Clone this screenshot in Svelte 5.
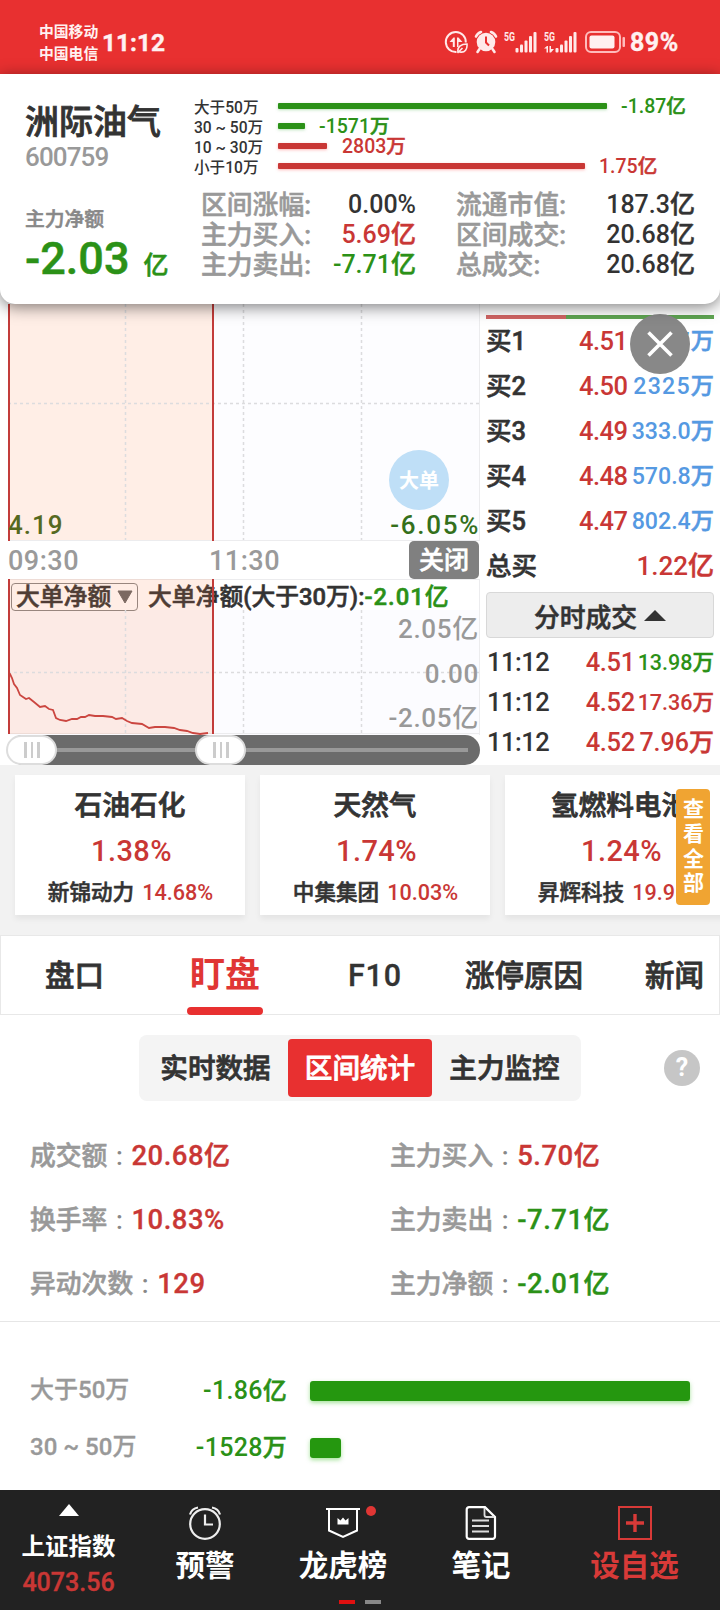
<script lang="ts">
  type Tone = "up" | "down" | "ink";

  const flows: { label: string; value: string; width: number; gap: number; tone: Tone }[] = [
    { label: "大于50万", value: "-1.87亿", width: 329, gap: 14, tone: "down" },
    { label: "30 ~ 50万", value: "-1571万", width: 27, gap: 14, tone: "down" },
    { label: "10 ~ 30万", value: "2803万", width: 49, gap: 15, tone: "up" },
    { label: "小于10万", value: "1.75亿", width: 307, gap: 14, tone: "up" },
  ];

  const summary: { label: string; value: string; tone: Tone }[] = [
    { label: "区间涨幅:", value: "0.00%", tone: "ink" },
    { label: "流通市值:", value: "187.3亿", tone: "ink" },
    { label: "主力买入:", value: "5.69亿", tone: "up" },
    { label: "区间成交:", value: "20.68亿", tone: "ink" },
    { label: "主力卖出:", value: "-7.71亿", tone: "down" },
    { label: "总成交:", value: "20.68亿", tone: "ink" },
  ];

  const bids = [
    { name: "买1", price: "4.51", amount: "2147万" },
    { name: "买2", price: "4.50", amount: "2325万" },
    { name: "买3", price: "4.49", amount: "333.0万" },
    { name: "买4", price: "4.48", amount: "570.8万" },
    { name: "买5", price: "4.47", amount: "802.4万" },
  ];

  const trades = [
    { time: "11:12", price: "4.51", amount: "13.98万", tone: "down", big: false },
    { time: "11:12", price: "4.52", amount: "17.36万", tone: "up", big: false },
    { time: "11:12", price: "4.52", amount: "7.96万", tone: "up", big: true },
  ];

  const sectors = [
    { name: "石油石化", pct: "1.38%", stock: "新锦动力", stockPct: "14.68%" },
    { name: "天然气", pct: "1.74%", stock: "中集集团", stockPct: "10.03%" },
    { name: "氢燃料电池", pct: "1.24%", stock: "昇辉科技", stockPct: "19.95%" },
  ];

  const stats: { label: string; value: string; tone: Tone }[] = [
    { label: "成交额", value: "20.68亿", tone: "up" },
    { label: "主力买入", value: "5.70亿", tone: "up" },
    { label: "换手率", value: "10.83%", tone: "up" },
    { label: "主力卖出", value: "-7.71亿", tone: "down" },
    { label: "异动次数", value: "129", tone: "up" },
    { label: "主力净额", value: "-2.01亿", tone: "down" },
  ];

  const ranges = [
    { label: "大于50万", value: "-1.86亿", width: 380 },
    { label: "30 ~ 50万", value: "-1528万", width: 31 },
  ];

  // net big-order curve, chart coordinates
  const curve =
    "M0 94 L2 95 L4 99 L6 105 L9 109 L12 116 L15 118 L18 120 L21 119 L26 123 L32 128 L37 127 L41 130 L45 131 L48 139 L52 141 L58 142 L64 140 L69 140 L73 138 L77 138 L81 136 L87 137 L95 137 L104 138 L108 140 L114 139 L119 142 L124 144 L134 145 L141 149 L147 148 L157 148 L166 149 L172 151 L179 152 L185 154 L192 155 L200 154";
</script>

<!-- digits run a little larger than the unit that follows them -->
{#snippet num(value: string)}
  {@const unit = /[万亿]$/.test(value) ? value.slice(-1) : ""}
  {unit ? value.slice(0, -1) : value}{#if unit}<span class="unit">{unit}</span>{/if}
{/snippet}

{#snippet signal(arrows: boolean)}
  <svg class="signal" width="34" height="24" viewBox="0 0 34 24" fill="#ffe9e9">
    <text x="0" y="10.5" font-size="12.5" font-weight="700" textLength="11" lengthAdjust="spacingAndGlyphs">5G</text>
    <rect x="11.500" y="18" width="3" height="4.500" rx="1" />
    <rect x="16" y="14.500" width="3" height="8" rx="1" />
    <rect x="20.500" y="10.500" width="3" height="12" rx="1" />
    <rect x="25" y="6" width="3" height="16.500" rx="1" />
    <rect x="29.500" y="2" width="3" height="20.500" rx="1" />
    {#if arrows}
      <path d="M0 18.500l3-2.500h1v6.500H2.500V18.500zM5.500 16H7v3h3L7 22.500H5.500z" />
    {/if}
  </svg>
{/snippet}

<div class="screen">
  <header class="status">
    <div class="carriers"><span>中国移动</span><span>中国电信</span></div>
    <div class="clock">11:12</div>
    <div class="icons">
      <svg width="24" height="24" viewBox="0 0 24 24" fill="none" stroke="#ffe9e9" stroke-width="2">
        <path d="M21.800 12.500A10 10 0 1 0 12.500 22" />
        <path d="M5.500 12l4-4.500h1.300V17H8.800v-5zM13 7.500h1.500l4 4.500h-4v5H13z" fill="#ffe9e9" stroke="none" />
        <path d="M14 22c-1-5 3-8 9-8 .5 5-2 9-7 8zM13.500 23l5-5" stroke-width="1.600" />
      </svg>
      <svg width="24" height="24" viewBox="0 0 24 24" fill="#ffe9e9">
        <circle cx="12" cy="12" r="9.300" />
        <path d="M2 6.500A8 8 0 0 1 7 2M22 6.500A8 8 0 0 0 17 2M5.500 19L3.500 22M18.500 19l2 3" stroke="#ffe9e9" stroke-width="2.600" stroke-linecap="round" fill="none" />
        <path d="M12 6.500V12.500l3 3" stroke="#e83030" stroke-width="2" fill="none" />
      </svg>
      {@render signal(false)}
      {@render signal(true)}
      <svg class="battery" width="42" height="24" viewBox="0 0 42 24">
        <rect x="1" y="2" width="34" height="20" rx="5" fill="none" stroke="#fbb" stroke-width="2" />
        <rect x="4.500" y="5.500" width="25" height="13" rx="2" fill="#fff1f1" />
        <rect x="37.500" y="7" width="2.500" height="10" rx="1" fill="#fbb" />
      </svg>
    </div>
    <div class="charge">89%</div>
  </header>

  <section class="panel">
    <div class="who">
      <h1>洲际油气</h1>
      <div class="code">600759</div>
      <div class="netLabel">主力净额</div>
      <div class="net down">-2.03<span>亿</span></div>
    </div>
    <div class="info">
      <div class="flows">
        {#each flows as f}
          <div class="flow">
            <span class="flowLabel">{f.label}</span>
            <i class="flowBar {f.tone}" style="width:{f.width}px"></i>
            <span class="flowValue {f.tone}" style="margin-left:{f.gap}px">{@render num(f.value)}</span>
          </div>
        {/each}
      </div>
      <div class="summary">
        {#each summary as s}
          <span class="muted">{s.label}</span>
          <b class={s.tone}>{@render num(s.value)}</b>
        {/each}
      </div>
    </div>
  </section>

  <section class="market">
    <div class="charts">
      <div class="price">
        <svg width="472" height="237" viewBox="0 0 472 237">
          <rect width="472" height="237" fill="#fdfdff" />
          <rect width="205" height="237" fill="#ffeee6" />
          <path d="M117.500 0V237M235.500 0V237M353.500 0V237M0 99.500H471" class="grid" />
          <path d="M0 236.500H472M471.500 0V237" stroke="#ececee" />
          <path d="M1 0V237M205 0V237" stroke="#c33c3a" stroke-width="2" />
        </svg>
        <span class="low">4.19</span>
        <span class="drop">-6.05%</span>
        <span class="bigOrder">大单</span>
      </div>
      <div class="axis">
        <span>09:30</span>
        <span>11:30</span>
        <button>关闭</button>
      </div>
      <div class="orders">
        <svg width="472" height="156" viewBox="0 0 472 156">
          <rect y="31" width="472" height="125" fill="#fcfcff" />
          <path d="M0 .5H472M471.500 0V156M0 154.500H472" stroke="#ececee" />
          <path d="M235.500 31V155M353.500 31V155M205 93.500H471" class="grid" />
        </svg>
        <div class="legend">
          <span class="select">大单净额<svg width="16" height="14" viewBox="0 0 16 14"><path d="M1 1h14L8 13z" fill="#666" stroke="#666" stroke-linejoin="round" /></svg></span>
          <span class="legendText">大单净额(大于30万):<em class="down">-2.01亿</em></span>
        </div>
        <div class="scale"><span>2.05亿</span><span>0.00</span><span>-2.05亿</span></div>
        <svg class="veil" width="206" height="157" viewBox="0 0 206 157">
          <rect width="205" height="155" fill="#ff7e45" fill-opacity=".14" />
          <path d="M117.500 31V155M0 93.500H205" class="grid" />
          <path d={curve} fill="none" stroke="#cb4640" stroke-width="1.800" />
          <path d="M1 0V155M205 0V155" stroke="#c33c3a" stroke-width="2" />
        </svg>
      </div>
      <div class="slider">
        <i class="knob"></i>
        <i class="knob right"></i>
      </div>
    </div>

    <div class="book">
      <div class="ratio"><i></i></div>
      {#each bids as b}
        <div class="bid">
          <span>{b.name}</span>
          <span class="bidPrice up">{b.price}</span>
          <span class="amount" class:whole={!b.amount.includes(".")}>{@render num(b.amount)}</span>
        </div>
      {/each}
      <div class="bid">
        <span>总买</span>
        <span class="total up">{@render num("1.22亿")}</span>
      </div>
      <button class="ticks">
        分时成交
        <svg width="22" height="11" viewBox="0 0 22 11"><path d="M0 11L11 0l11 11z" fill="#333" /></svg>
      </button>
      {#each trades as t}
        <div class="trade">
          <span class="time">{t.time}</span>
          <span class="tradePrice up">{t.price}</span>
          <span class="tradeAmount {t.tone}" class:big={t.big}>{@render num(t.amount)}</span>
        </div>
      {/each}
      <span class="close">
        <svg width="26" height="26" viewBox="0 0 26 26"><path d="M1.500 1.500l23 23M24.500 1.500l-23 23" stroke="#fff" stroke-width="3.600" /></svg>
      </span>
    </div>
  </section>

  <section class="sectors">
    {#each sectors as s}
      <div class="card">
        <div class="cardName">{s.name}</div>
        <div class="cardPct">{s.pct}</div>
        <div class="cardStock">{s.stock}<span>{s.stockPct}</span></div>
      </div>
    {/each}
    <span class="all">查看全部</span>
  </section>

  <nav class="tabs">
    <span>盘口</span>
    <span class="active">盯盘</span>
    <span>F10</span>
    <span>涨停原因</span>
    <span>新闻</span>
  </nav>

  <div class="switcher">
    <div class="segment">
      <span>实时数据</span>
      <span class="on">区间统计</span>
      <span>主力监控</span>
    </div>
    <span class="help">?</span>
  </div>

  <section class="stats">
    {#each stats as s}
      <div class="stat">
        <span class="muted">{s.label}</span>
        <span class="colon">:</span>
        <b class={s.tone}>{@render num(s.value)}</b>
      </div>
    {/each}
  </section>

  <section class="ranges">
    {#each ranges as r}
      <div class="range">
        <span class="rangeLabel">{r.label}</span>
        <span class="rangeValue down">{@render num(r.value)}</span>
        <i style="width:{r.width}px"></i>
      </div>
    {/each}
  </section>

  <footer class="dock">
    <div class="index">
      <svg width="20" height="12" viewBox="0 0 20 12"><path d="M0 12L10 0l10 12z" fill="#fff" /></svg>
      <strong>上证指数</strong>
      <span>4073.56</span>
    </div>
    <div class="item">
      <svg width="34" height="34" viewBox="0 0 34 34" fill="none" stroke="#eee" stroke-width="2.200">
        <circle cx="17" cy="18" r="14.800" />
        <path d="M17 8.500V18.500h8M2 8.500C3 5 6 2.200 10 1.500M32 8.500C31 5 28 2.200 24 1.500" />
      </svg>
      <strong>预警</strong>
    </div>
    <div class="item">
      <svg width="34" height="34" viewBox="0 0 34 34" fill="none" stroke="#fff" stroke-width="2">
        <path d="M0 3H34M3 3V24.500L17 31l14-6.500V3" />
        <path d="M11.500 18.500V12l3 2.500L17 11.500l2.500 3L22.500 12v6.500z" fill="#fff" stroke="none" />
      </svg>
      <strong>龙虎榜</strong>
      <i class="dot"></i>
    </div>
    <div class="item">
      <svg width="34" height="34" viewBox="0 0 34 34" fill="none" stroke="#fff" stroke-width="2.200">
        <path d="M5 1.200H21L31 11V30.500a2.300 2.300 0 0 1-2.300 2.300H5a2.300 2.300 0 0 1-2.300-2.300V3.500A2.300 2.300 0 0 1 5 1.200z" />
        <path d="M20.500 2v7a2 2 0 0 0 2 2H30M8 14.500h17M8 20h17M8 25.500h17" stroke="#ddd" stroke-width="1.800" />
      </svg>
      <strong>笔记</strong>
    </div>
    <div class="item red">
      <svg width="34" height="34" viewBox="0 0 34 34" fill="none" stroke="#d83a38">
        <rect x="1" y="1" width="32" height="32" stroke-width="2" />
        <path d="M17 8V26M8 17H26" stroke-width="3.400" />
      </svg>
      <strong>设自选</strong>
    </div>
    <div class="pager"><i></i><i></i></div>
  </footer>
</div>

<style>
  :global(body){
    margin: 0;
    background: #fff;
  }
  .screen{
    width: 720px;
    height: 1610px;
    overflow: hidden;
    background: #fff;
    color: #333;
    font-family: Roboto, "Noto Sans CJK SC", sans-serif;
    font-weight: 500;
    white-space: nowrap;
  }
  .screen :global(svg){ display: block; flex: none; }
  button{
    font: inherit;
    border: 0;
    padding: 0;
  }
  em, i{ font-style: normal; }
  b{ font-weight: 500; }
  .up{ color: #c93735; }
  .down{ color: #2b9117; }
  .ink{ color: #333; }
  .muted{ color: #999; }
  .grid{
    fill: none;
    stroke: #dcdcde;
    stroke-width: 1.500;
    stroke-dasharray: 3 3;
  }

  /* the CJK face has no medium cut, thicken the regular one */
  h1, .unit, .net span, .muted, .netLabel, .axis button, .legend, .bid > span:first-child,
  .ticks, .cardName, .cardStock, .tabs span, .segment span, .rangeLabel{
    -webkit-text-stroke: .55px currentColor;
  }
  h1, .tabs span, .segment span, .cardName{ -webkit-text-stroke-width: .8px; }
  .cardStock span, .tabs .active{ -webkit-text-stroke-width: 0; }

  .status{
    height: 74px;
    box-sizing: border-box;
    padding: 21px 0 0 39px;
    background: #e83030;
    color: #fff1f1;
    display: flex;
    font-weight: 700;
  }
  .carriers{
    width: 63px;
    font-size: 14.800px;
    line-height: 22px;
    display: flex;
    flex-direction: column;
  }
  .clock{
    width: 329px;
    font-size: 24.500px;
    line-height: 43px;
    -webkit-text-stroke: .4px currentColor;
  }
  .icons{
    display: flex;
    height: 24px;
    margin-top: 9px;
    width: 199px;
    margin-left: 13px;
  }
  .icons svg:nth-child(2){ margin-left: 6px; }
  .signal{ margin-left: 6px; }
  .battery{ margin-left: 7px; }
  .charge{
    margin-left: -13px;
    font-size: 25px;
    line-height: 43px;
    letter-spacing: .5px;
    -webkit-text-stroke: .4px currentColor;
  }

  .panel{
    position: relative;
    z-index: 2;
    height: 230px;
    display: flex;
    background: #fff;
    border-radius: 0 0 15px 15px;
    box-shadow: 0 3px 16px rgba(0, 0, 0, .5);
  }
  .who{
    width: 169px;
    padding: 27px 0 0 25px;
  }
  h1{
    margin: 0;
    font-size: 34px;
    line-height: 42px;
    font-weight: 500;
  }
  .code{
    font-size: 26px;
    line-height: 28px;
    letter-spacing: -.9px;
    color: #999;
  }
  .netLabel{
    margin-top: 36px;
    font-size: 19.800px;
    line-height: 26px;
    color: #888;
  }
  .net{
    margin-top: 2px;
    font-size: 45px;
    line-height: 48px;
    -webkit-text-stroke: .5px currentColor;
  }
  .net span{
    font-size: 25px;
    margin-left: 14px;
  }
  .info{ padding-top: 22px; }
  .flow{
    height: 20px;
    display: flex;
    align-items: center;
  }
  .flowLabel{
    width: 84px;
    padding-top: 4px;
    font-size: 15.600px;
    line-height: 20px;
  }
  .flowBar{
    height: 6px;
    border-radius: 1px;
    background: currentColor;
    box-shadow: 0 1px 3px rgba(120, 200, 120, .5);
  }
  .flowBar.up{ box-shadow: 0 1px 3px rgba(255, 120, 120, .5); }
  .flowValue{
    padding-top: 1px;
    font-size: 19.500px;
    line-height: 20px;
  }
  .summary{
    margin: 14px 0 0 7px;
    display: grid;
    grid-template-columns: 116px 99px 156px 123px;
    grid-auto-rows: 30px;
    font-size: 25.800px;
    line-height: 30px;
  }
  .summary .muted:nth-child(4n + 3){ padding-left: 40px; }
  .summary b{
    text-align: right;
    font-size: 25px;
  }

  .market{
    height: 461px;
    display: flex;
  }
  .charts{
    width: 472px;
    margin-left: 8px;
  }
  .price{
    position: relative;
    height: 237px;
  }
  .price span{
    position: absolute;
    font-size: 26px;
    line-height: 28px;
  }
  .low{
    left: 0;
    bottom: 2px;
    color: #56691f;
    letter-spacing: 1px;
  }
  .price .drop{
    right: 0;
    bottom: 2px;
    color: #34701c;
    letter-spacing: 1.700px;
  }
  .price .bigOrder{
    left: 381px;
    top: 146px;
    width: 60px;
    height: 60px;
    border-radius: 50%;
    background: #bfdff7;
    color: #fff;
    font-size: 20px;
    line-height: 62px;
    font-weight: 700;
    text-align: center;
  }
  .axis{
    height: 38px;
    display: flex;
    font-size: 27px;
    line-height: 40px;
    letter-spacing: .5px;
    color: #9a9a9a;
  }
  .axis span{ width: 201px; }
  .axis button{
    margin-left: -1px;
    width: 70px;
    border-radius: 5px;
    background: #808080;
    color: #fff;
    font-size: 25px;
    line-height: 39px;
  }
  .orders{
    position: relative;
    height: 156px;
  }
  .legend{
    position: absolute;
    left: 3px;
    top: 4px;
    display: flex;
    align-items: center;
    font-size: 23.800px;
    line-height: 26px;
  }
  .legend em{ letter-spacing: 1px; }
  .select{
    width: 127px;
    box-sizing: border-box;
    border: 1px solid #888;
    border-radius: 4px;
    padding-left: 4px;
    display: flex;
    align-items: center;
    gap: 6px;
  }
  .legendText{ margin-left: 10px; }
  .scale{
    position: absolute;
    right: 1px;
    top: 28px;
    display: grid;
    grid-auto-rows: 44.500px;
    line-height: 44.500px;
    text-align: right;
    font-size: 26px;
    letter-spacing: .7px;
    color: #999;
  }
  .veil{
    position: absolute;
    left: 0;
    top: 0;
    z-index: 1;
  }
  .slider{
    position: relative;
    z-index: 1;
    height: 30px;
    border-radius: 15px;
    background: linear-gradient(#999, #999) 20px 50% / 440px 4px no-repeat #6b6b6b;
  }
  .knob{
    position: absolute;
    left: -2px;
    top: 0;
    width: 47px;
    height: 26px;
    border: 2px solid #ddd;
    border-radius: 15px;
    background:
      linear-gradient(90deg, #ccc 3px, transparent 3px 7px, #ccc 7px 9px, transparent 9px 13px, #ccc 13px) center / 16px 16px no-repeat #fff;
  }
  .knob.right{ left: 187px; }

  .book{
    position: relative;
    width: 228px;
    margin-left: 6px;
    padding-top: 11px;
  }
  .ratio{
    height: 4px;
    background: #5fa552;
  }
  .ratio i{
    display: block;
    width: 80px;
    height: 4px;
    background: #d16564;
  }
  .bid, .trade{
    height: 45px;
    display: flex;
    justify-content: space-between;
    align-items: center;
    font-size: 25.500px;
    line-height: 45px;
  }
  .bidPrice{
    margin-left: auto;
    width: 48px;
    text-align: right;
    letter-spacing: -.5px;
  }
  .amount{
    width: 87px;
    text-align: right;
    font-size: 23.200px;
    color: #5599e2;
  }
  .amount.whole{ letter-spacing: 1.200px; }
  .amount.whole .unit, .amount.whole :global(.unit){ letter-spacing: 0; }
  .total{ font-size: 26px; }
  .ticks{
    width: 228px;
    height: 46px;
    margin: 3px 0 4px;
    display: flex;
    align-items: center;
    justify-content: center;
    gap: 7px;
    border: 1px solid #d8d8d8;
    border-radius: 4px;
    background: #ededed;
    color: #333;
    font-size: 25.800px;
  }
  .trade{
    height: 40px;
    line-height: 41px;
    padding-left: 1px;
  }
  .time{ letter-spacing: -.5px; }
  .tradePrice{
    width: 54px;
    margin-left: auto;
    text-align: right;
    letter-spacing: -.3px;
  }
  .tradeAmount{
    width: 79px;
    text-align: right;
    font-size: 21.500px;
  }
  .tradeAmount.big{ font-size: 25px; }
  .close{
    position: absolute;
    left: 144px;
    top: 10px;
    width: 60px;
    height: 60px;
    border-radius: 50%;
    background: #888;
    display: grid;
    place-items: center;
  }

  .sectors{
    position: relative;
    height: 170px;
    box-sizing: border-box;
    padding: 10px 0 0 15px;
    display: flex;
    gap: 15px;
    overflow: hidden;
    background: #f2f2f2;
  }
  .card{
    flex: none;
    width: 230px;
    height: 127px;
    padding-top: 13px;
    background: #fff;
    text-align: center;
    box-shadow: 0 4px 6px rgba(0, 0, 0, .06);
  }
  .cardName{
    font-size: 27.700px;
    line-height: 36px;
  }
  .cardPct{
    margin-top: 7px;
    font-size: 29px;
    line-height: 40px;
    color: #c93735;
    letter-spacing: .4px;
    padding-left: 3px;
  }
  .cardStock{
    margin-top: 5px;
    font-size: 21.600px;
    line-height: 34px;
    padding-left: 1px;
  }
  .cardStock span{
    margin-left: 8px;
    color: #c93735;
  }
  .all{
    position: absolute;
    left: 676px;
    top: 24px;
    width: 21px;
    height: 99px;
    padding: 8px 6px 9px 7px;
    border-radius: 4px;
    background: #f0a432;
    color: #fff;
    font-size: 21px;
    line-height: 24.800px;
    font-weight: 700;
    white-space: normal;
  }

  .tabs{
    height: 80px;
    box-sizing: border-box;
    border: 1px solid #e8e8e8;
    padding-left: 44px;
    display: flex;
    font-size: 29.500px;
    line-height: 80px;
  }
  .tabs span:nth-child(1){ width: 142px; }
  .tabs span:nth-child(3){
    width: 117px;
    font-size: 30.500px;
    letter-spacing: .8px;
    -webkit-text-stroke-width: .3px;
  }
  .tabs span:nth-child(4){ width: 180px; }
  .tabs .active{
    position: relative;
    width: 76px;
    margin-right: 85px;
    color: #e03634;
    font-size: 35px;
    font-weight: 700;
    text-align: center;
  }
  .active::after{
    content: "";
    position: absolute;
    left: 0;
    bottom: -1px;
    width: 76px;
    height: 8px;
    border-radius: 4px;
    background: #e83030;
  }

  .switcher{
    display: flex;
    align-items: center;
    height: 66px;
    margin: 20px 0 0 139px;
  }
  .segment{
    width: 442px;
    height: 66px;
    box-sizing: border-box;
    padding: 4px 0 4px 4px;
    display: flex;
    border-radius: 8px;
    background: #f4f4f4;
    font-size: 27.600px;
    line-height: 60px;
  }
  .segment span{
    width: 145px;
    text-align: center;
  }
  .segment .on{
    width: 144px;
    height: 58px;
    border-radius: 4px;
    background: #e83030;
    color: #fff;
  }
  .help{
    width: 36px;
    height: 36px;
    margin-left: 83px;
    border-radius: 50%;
    background: #c6c6c6;
    color: #fff;
    font-size: 25px;
    line-height: 36px;
    font-weight: 700;
    text-align: center;
  }

  .stats{
    height: 221px;
    box-sizing: border-box;
    padding: 23px 0 0 30px;
    display: grid;
    grid-template-columns: 360px 1fr;
    grid-auto-rows: 64px;
    border-bottom: 1px solid #e6e6e6;
    line-height: 64px;
    font-size: 25.800px;
  }
  .stat{ display: flex; }
  .colon{
    width: 24px;
    text-align: center;
    color: #888;
  }
  .stat b{
    font-size: 27.500px;
    letter-spacing: .5px;
    -webkit-text-stroke: .3px currentColor;
  }
  .stat .unit{ font-size: 26px; }
  .ranges{
    height: 168px;
    box-sizing: border-box;
    padding: 40px 0 0 30px;
  }
  .range{
    height: 57px;
    display: flex;
    align-items: center;
    line-height: 59px;
  }
  .rangeLabel{
    width: 120px;
    color: #999;
    font-size: 24px;
    -webkit-text-stroke-width: .3px;
  }
  .rangeValue{
    width: 137px;
    margin-right: 23px;
    text-align: right;
    font-size: 25px;
    letter-spacing: .3px;
  }
  .rangeValue .unit{ font-size: 24px; }
  .range i{
    height: 20px;
    border-radius: 3px;
    background: #25970f;
    box-shadow: 0 2px 4px rgba(80, 200, 60, .5);
  }

  .dock{
    position: relative;
    height: 120px;
    display: grid;
    grid-template-columns: 137px 136px 140px 136px 171px;
    background: #222;
    color: #fff;
  }
  .index, .item{
    position: relative;
    display: flex;
    flex-direction: column;
    align-items: center;
  }
  .index{ padding-top: 14px; }
  .index strong{
    margin-top: 15px;
    font-size: 23.500px;
    line-height: 32px;
  }
  .index span{
    margin-top: 4px;
    font-size: 25px;
    line-height: 32px;
    color: #c93735;
    -webkit-text-stroke: .4px currentColor;
  }
  .item{ padding-top: 16px; }
  .item strong{
    margin-top: 6px;
    font-size: 29.500px;
    line-height: 40px;
  }
  .item.red{ color: #d83a38; }
  .dot{
    position: absolute;
    left: 93px;
    top: 16px;
    width: 10px;
    height: 10px;
    border-radius: 50%;
    background: #e03634;
  }
  .pager{
    position: absolute;
    left: 339px;
    bottom: 6px;
    display: flex;
    gap: 10px;
  }
  .pager i{
    width: 16px;
    height: 4px;
    background: #e01010;
  }
  .pager i + i{ background: #888; }
</style>
